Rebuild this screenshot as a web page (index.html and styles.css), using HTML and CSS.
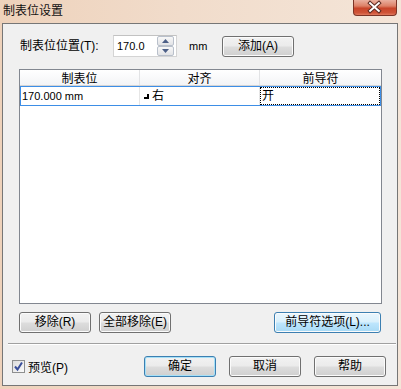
FILE: index.html
```html
<!DOCTYPE html>
<html>
<head>
<meta charset="utf-8">
<link rel="stylesheet" href="styles.css">
</head>
<body>
<div class="window">
  <div class="titlebar">
    <span class="title">制表位设置</span>
    <div class="close">
      <svg width="44" height="16" viewBox="0 0 44 16">
        <path d="M17.5 3 L26.5 11 M26.5 3 L17.5 11" stroke="#5b2a22" stroke-width="4" stroke-linecap="square"/>
        <path d="M17.5 3 L26.5 11 M26.5 3 L17.5 11" stroke="#ffffff" stroke-width="2" stroke-linecap="square"/>
      </svg>
    </div>
  </div>
  <div class="client">
    <div class="toprow">
      <span class="label">制表位位置(T):</span>
      <div class="spin">
        <span class="val">170.0</span>
        <div class="arrows">
          <div class="arr">
            <svg width="7" height="4" viewBox="0 0 7 4"><path d="M0 4 L3.5 0 L7 4 Z" fill="#4c5f87"/></svg>
          </div>
          <div class="arr">
            <svg width="7" height="4" viewBox="0 0 7 4"><path d="M0 0 L3.5 4 L7 0 Z" fill="#4c5f87"/></svg>
          </div>
        </div>
      </div>
      <span class="unit">mm</span>
      <button class="btn">添加(A)</button>
    </div>

    <div class="list">
      <div class="head">
        <div class="hcell">制表位</div>
        <div class="hcell">对齐</div>
        <div class="hcell last">前导符</div>
      </div>
      <div class="row">
        <div class="cell c1"><span class="num">170.000 mm</span></div>
        <div class="cell c2">
          <svg class="tabicon" width="5" height="5" viewBox="0 0 5 5"><rect x="3" y="0" width="2" height="5" fill="#000"/><rect x="0" y="3" width="5" height="2" fill="#000"/></svg>
          <span>右</span>
        </div>
        <div class="cell c3">开</div>
      </div>
    </div>

    <div class="btnrow">
      <button class="btn">移除(R)</button>
      <button class="btn">全部移除(E)</button>
      <button class="btn wide hot">前导符选项(L)...</button>
    </div>

    <div class="sep"></div>

    <div class="bottom">
      <label class="check">
        <span class="box">
          <svg width="11" height="11" viewBox="0 0 11 11"><path d="M2 5.5 L4.5 8.5 L9 1.5" stroke="#3a4f9a" stroke-width="2" fill="none"/></svg>
        </span>
        <span class="ctext">预览(P)</span>
      </label>
      <div class="actions">
        <button class="btn def">确定</button>
        <button class="btn">取消</button>
        <button class="btn">帮助</button>
      </div>
    </div>
  </div>
</div>
</body>
</html>
```

FILE: styles.css
```css
html, body {
  margin: 0;
  padding: 0;
}
body {
  width: 401px;
  height: 389px;
  overflow: hidden;
  font-family: "Liberation Sans", "Noto Sans CJK SC", sans-serif;
  font-size: 12px;
  color: #000;
}
.window {
  width: 401px;
  height: 389px;
  box-sizing: border-box;
  display: flex;
  flex-direction: column;
  background: linear-gradient(to right, #eed2bb 0%, #f1dccb 45%, #f4e5d8 100%);
}
.titlebar {
  height: 23px;
  display: flex;
  align-items: flex-start;
}
.title {
  padding-left: 3px;
  line-height: 20px;
  font-family: "Noto Sans CJK SC", sans-serif;
  font-size: 12px;
  color: #111;
}
.close {
  margin-left: auto;
  margin-right: 4px;
  width: 44px;
  height: 16px;
  box-sizing: border-box;
  border: 1px solid #7c3426;
  border-top: none;
  border-radius: 0 0 4px 4px;
  background: linear-gradient(#eab09f 0%, #dd8167 40%, #c8452a 55%, #cf5438 85%, #e07a5e 100%);
  display: flex;
  align-items: center;
  justify-content: center;
}
.close svg {
  display: block;
  margin-left: -1px;
}
.client {
  flex: 1;
  margin: 0 3px 3px 2px;
  border: 1px solid #767676;
  background: #f0f0f0;
  display: flex;
  flex-direction: column;
}
.toprow {
  margin-top: 11px;
  height: 22px;
  padding-left: 17px;
  display: flex;
  align-items: center;
}
.label {
  width: 93px;
  line-height: 14px;
}
.spin {
  width: 64px;
  height: 22px;
  box-sizing: border-box;
  border: 1px solid #d4d4d4;
  border-top-color: #c2c2c2;
  background: #fff;
  display: flex;
  align-items: center;
  padding-left: 3px;
}
.val {
  flex: 1;
  font-size: 11px;
}
.arrows {
  width: 17px;
  height: 20px;
  margin-right: 2px;
  display: flex;
  flex-direction: column;
}
.arr {
  flex: 1;
  box-sizing: border-box;
  border: 1px solid #b9c0cb;
  border-radius: 2px;
  background: linear-gradient(#f8f8f8, #e2e3e6);
  display: flex;
  align-items: center;
  justify-content: center;
}
.arr svg {
  display: block;
}
.unit {
  margin-left: 12px;
  width: 33px;
  font-size: 11px;
}
.btn {
  width: 72px;
  height: 21px;
  box-sizing: border-box;
  margin: 0;
  padding: 0;
  border: 1px solid #707070;
  border-radius: 3px;
  background: linear-gradient(#f2f2f2 0%, #ebebeb 48%, #dddddd 52%, #cfcfcf 100%);
  box-shadow: inset 0 0 0 1px #fbfbfb;
  font-family: "Liberation Sans", "Noto Sans CJK SC", sans-serif;
  font-size: 12px;
  line-height: 17px;
  color: #000;
  text-align: center;
}
.btn.hot {
  border-color: #3c7fb1;
  background: linear-gradient(#eaf6fd 0%, #d9f0fc 48%, #bee6fd 52%, #a7d9f5 100%);
}
.btn.def {
  border-color: #3c7fb1;
  box-shadow: inset 0 0 0 1px #a6e0f7;
}
.btn.wide {
  width: 107px;
}
.list {
  margin: 12px 0 0 16px;
  width: 363px;
  height: 235px;
  box-sizing: border-box;
  border: 1px solid #828790;
  background: #fff;
}
.head {
  display: grid;
  grid-template-columns: 120px 120px 1fr;
  height: 16px;
  box-sizing: border-box;
  border-bottom: 1px solid #d5d5d5;
  background: linear-gradient(#ffffff, #f3f4f6);
}
.hcell {
  border-right: 1px solid #e2e3e5;
  text-align: center;
  line-height: 15px;
  font-family: "Noto Sans CJK SC", sans-serif;
}
.hcell.last {
  border-right: none;
}
.row {
  display: grid;
  grid-template-columns: 119px 120px 1fr;
  height: 20px;
  box-sizing: border-box;
  border: 1px solid #3d8ee6;
}
.cell {
  display: flex;
  align-items: center;
  line-height: 14px;
  border-right: 1px solid #e6e6e6;
}
.c1 {
  padding-left: 1px;
}
.num {
  font-size: 11px;
}
.c2 {
  padding-left: 4px;
}
.tabicon {
  display: block;
  margin-right: 3px;
  margin-top: 1px;
}
.c3 {
  border-right: none;
  padding-left: 2px;
  outline: 1px dotted #000;
  outline-offset: -1px;
}
.btnrow {
  margin-top: 8px;
  padding: 0 16px;
  display: flex;
  gap: 8px;
}
.btnrow .wide {
  margin-left: auto;
}
.sep {
  margin: 10px 1px 0 5px;
  border-top: 1px solid #a0a0a0;
  border-bottom: 1px solid #ffffff;
}
.bottom {
  margin-top: 11px;
  padding: 0 11px 0 9px;
  height: 21px;
  display: flex;
  align-items: center;
}
.check {
  display: flex;
  align-items: center;
}
.box {
  width: 13px;
  height: 13px;
  box-sizing: border-box;
  border: 1px solid #8e8f8f;
  background: linear-gradient(135deg, #dcdcdc, #fbfbfb);
  display: flex;
  align-items: center;
  justify-content: center;
}
.box svg {
  display: block;
}
.ctext {
  margin-left: 3px;
}
.actions {
  margin-left: auto;
  display: flex;
  gap: 13px;
}
```
